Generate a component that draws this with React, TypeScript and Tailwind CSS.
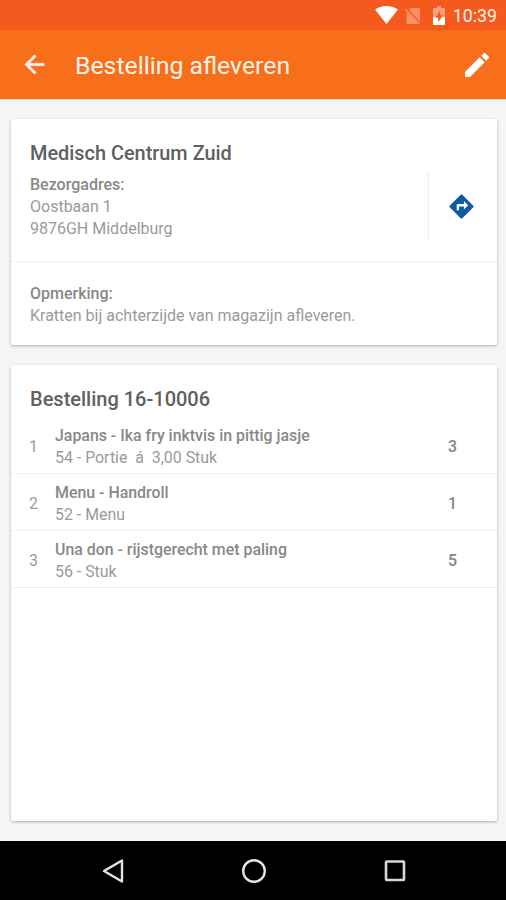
import React from 'react';

interface OrderLine {
  name: string;
  detail: string;
  amount: number;
}

const orderLines: OrderLine[] = [
  { name: 'Japans - Ika fry inktvis in pittig jasje', detail: '54 - Portie  á  3,00 Stuk', amount: 3 },
  { name: 'Menu - Handroll', detail: '52 - Menu', amount: 1 },
  { name: 'Una don - rijstgerecht met paling', detail: '56 - Stuk', amount: 5 },
];

const StatusBar: React.FC = () => (
  <div className="flex h-[30px] shrink-0 items-center justify-end bg-[#f4591d] pr-[9px] text-[#fff0e8]">
    <svg className="mr-[7px] h-[18px] w-[23px]" viewBox="0 0 23 18" fill="#fff">
      <path d="M11.5 18 0 3.6C3.2 1.2 7.2 0 11.5 0S19.8 1.2 23 3.6Z" />
    </svg>
    <svg className="mt-px mr-3 h-[18px] w-[16px]" viewBox="0 0 16 18">
      <path d="M6.2 1H13.5Q15 1 15 2.5V17H2.500Q1.500 17 1.500 16V6Z" fill="#f98f66" />
      <path d="M.5 1.200 15.500 17.200" stroke="#f4591d" strokeWidth="2.500" />
      <path d="M.3 2.200 14.300 17.200" stroke="#fa9a74" strokeWidth="1.200" />
    </svg>
    <svg className="mt-px mr-[8px] h-[19px] w-[12px]" viewBox="0 0 12 19">
      <path d="M4 0H8V2H11Q12 2 12 3V11H0V3Q0 2 1 2H4Z" fill="#f9a17c" />
      <path d="M0 11H12V18Q12 19 11 19H1Q0 19 0 18Z" fill="#fff" />
      <path d="M7.300 4 2.500 11.800H5.200V16.500L9.800 9.200H7.300Z" fill="#f4591d" />
    </svg>
    <span className="pt-[2px] text-[17.800px] leading-[30px]">10:39</span>
  </div>
);

const Toolbar: React.FC = () => (
  <header className="flex h-[69px] shrink-0 items-center bg-[#f76f1b] pr-[13px] pl-5 text-[#fff3ea]">
    <button type="button" aria-label="Terug" className="mr-[26px]">
      <svg className="h-[29px] w-[29px]" viewBox="0 0 24 24" fill="currentColor" stroke="currentColor" strokeWidth="0.400">
        <path d="M20 11H7.830l5.590-5.590L12 4l-8 8 8 8 1.410-1.410L7.830 13H20v-2z" />
      </svg>
    </button>
    <h1 className="flex-1 pt-[3px] text-[24.800px] leading-8">Bestelling afleveren</h1>
    <button type="button" aria-label="Bewerken">
      <svg className="h-[32px] w-[32px]" viewBox="0 0 24 24" fill="#fff">
        <path d="M3 17.250V20.500Q3 21 3.500 21H6.750L17.810 9.940l-3.750-3.750L3 17.250zM20.710 7.040c.39-.39.39-1.020 0-1.410l-2.340-2.340c-.39-.39-1.020-.39-1.410 0l-1.830 1.830 3.750 3.750 1.830-1.830z" />
      </svg>
    </button>
  </header>
);

const DeliveryCard: React.FC = () => (
  <section className="h-[226px] shrink-0 rounded-[2px] bg-white shadow-[0_1px_3px_rgba(0,0,0,0.3)]">
    <div className="h-[143px] border-b border-[#f0f0f0] pt-[21px] pl-[19px]">
      <h2 className="text-[19.900px] leading-7 font-medium text-[#606060]">Medisch Centrum Zuid</h2>
      <div className="mt-[6px] flex">
        <div className="flex-1">
          <p className="font-medium text-[#888]">Bezorgadres:</p>
          <p>Oostbaan 1</p>
          <p>9876GH Middelburg</p>
        </div>
        <div className="-mt-px flex h-[67px] w-[69px] items-center border-l border-[#ebebeb] pl-[18px]">
          <svg className="h-[29px] w-[29px]" viewBox="0 0 24 24" fill="#0c5ca5">
            <path d="M21.710 11.290l-9-9c-.39-.39-1.020-.39-1.410 0l-9 9c-.39.39-.39 1.020 0 1.410l9 9c.39.39 1.020.39 1.410 0l9-9c.39-.38.39-1.010 0-1.410zM14 14.500V12h-4v3H8v-4c0-.55.45-1 1-1h5V7.500l3.500 3.500-3.500 3.500z" />
          </svg>
        </div>
      </div>
    </div>
    <div className="pt-[21px] pl-[19px]">
      <p className="font-medium text-[#888]">Opmerking:</p>
      <p>Kratten bij achterzijde van magazijn afleveren.</p>
    </div>
  </section>
);

const OrderCard: React.FC = () => (
  <section className="h-[456px] shrink-0 rounded-[2px] bg-white pt-5 shadow-[0_1px_3px_rgba(0,0,0,0.3)]">
    <h2 className="mb-1 pl-[19px] text-[20px] leading-7 font-medium text-[#606060]">Bestelling 16-10006</h2>
    <ul className="text-[15.900px]">
      {orderLines.map((line, index) => (
        <li key={line.name} className="flex h-[57px] items-center border-b border-[#f0f0f0] pt-[3px] pl-[19px]">
          <span className="w-[25px] -translate-x-px">{index + 1}</span>
          <div className="flex-1">
            <p className="font-medium text-[#888]">{line.name}</p>
            <p className="whitespace-pre">{line.detail}</p>
          </div>
          <span className="w-[49px] font-medium text-[#848484]">{line.amount}</span>
        </li>
      ))}
    </ul>
  </section>
);

const NavigationBar: React.FC = () => (
  <nav className="flex h-[59px] shrink-0 items-center justify-center gap-[115px] bg-black pl-px">
    <svg className="h-[26px] w-[26px]" viewBox="0 0 26 26" fill="none" stroke="#e4e4e4" strokeWidth="2.400" strokeLinejoin="round">
      <path d="M22 2.500V23.500L4 13Z" />
    </svg>
    <svg className="h-[26px] w-[26px]" viewBox="0 0 26 26" fill="none" stroke="#e4e4e4" strokeWidth="2.400">
      <circle cx="13" cy="13" r="10.800" />
    </svg>
    <svg className="h-[26px] w-[26px]" viewBox="0 0 26 26" fill="none" stroke="#d8d8d8" strokeWidth="2.600">
      <rect x="4" y="3.500" width="18" height="18.500" rx="0.800" />
    </svg>
  </nav>
);

export default function App() {
  return (
    <div className="flex h-[900px] w-[506px] flex-col overflow-hidden bg-[#f5f5f5] font-['Roboto',sans-serif]">
      <StatusBar />
      <Toolbar />
      <main className="flex flex-1 flex-col gap-5 border-t border-[#fbd9c6] pt-[19px] pr-[9px] pl-[11px] text-[16px] leading-[22px] text-[#9a9a9a]">
        <DeliveryCard />
        <OrderCard />
      </main>
      <NavigationBar />
    </div>
  );
}
